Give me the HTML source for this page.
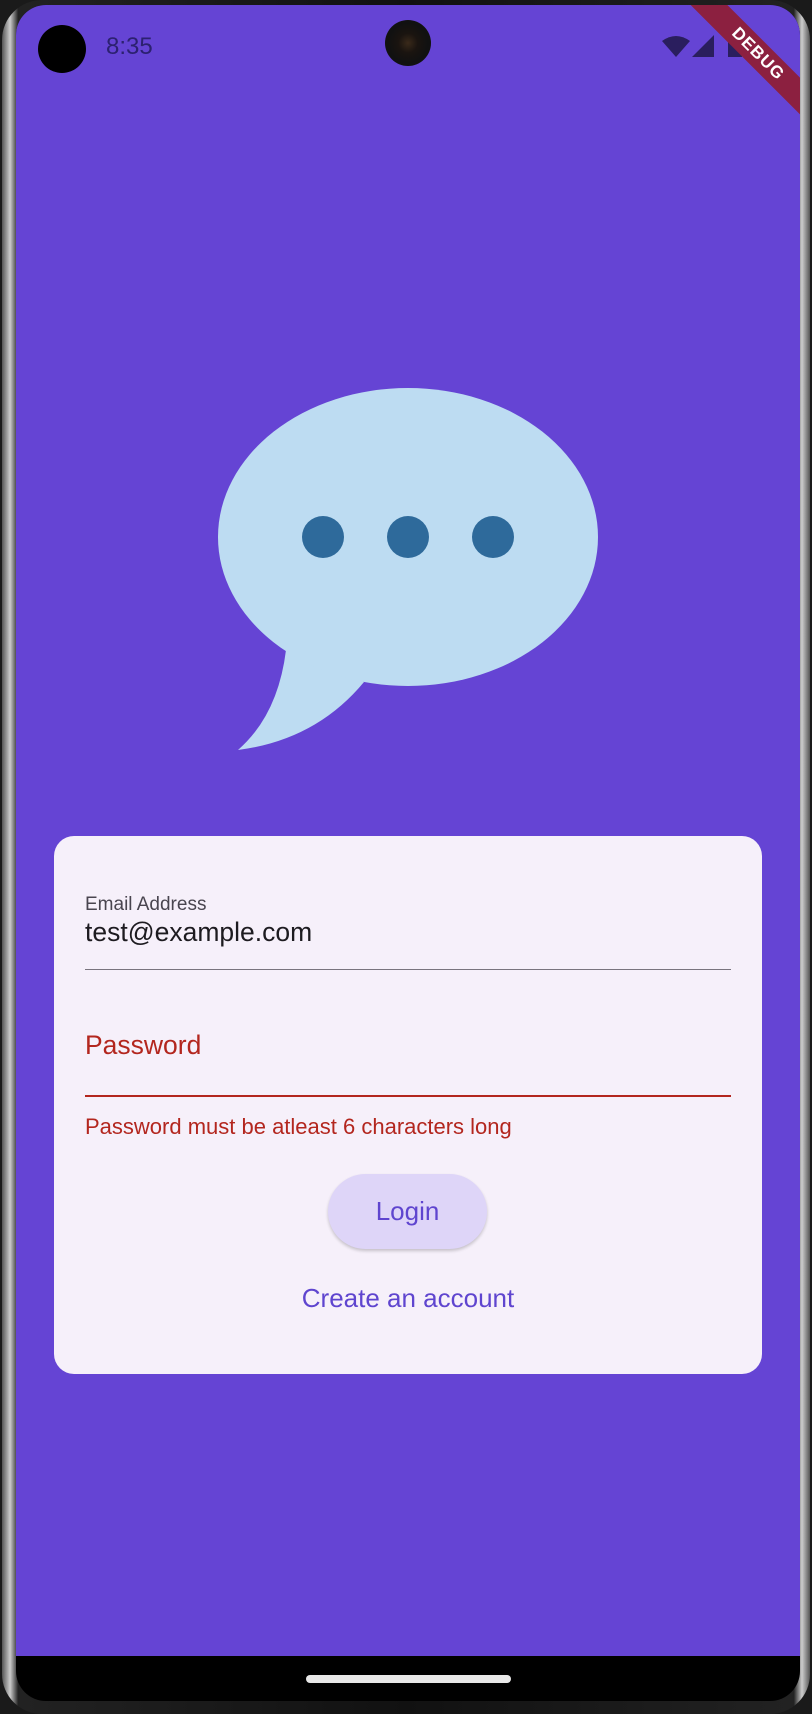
<!DOCTYPE html>
<html><head><meta charset="utf-8"><style>
*{margin:0;padding:0;box-sizing:border-box}
body{width:812px;height:1714px;background:#1a1a1a;position:relative;overflow:hidden;font-family:"Liberation Sans",sans-serif}
.frame{position:absolute;left:2px;top:0;width:808px;height:1714px;border-radius:40px;background:linear-gradient(90deg,#555,#ccc 1%,#222 2%,#111 50%,#222 98%,#ccc 99%,#555)}
.screen{position:absolute;left:16px;top:5px;width:784px;height:1696px;border-radius:30px;overflow:hidden;background:#000}
.purple{position:absolute;left:0;top:0;width:784px;height:1651px;background:#6544d4}
.abs{position:absolute}
.card{position:absolute;left:38px;top:831px;width:708px;height:538px;border-radius:20px;background:#f6f0fa}
</style></head><body>
<div class="frame"></div>
<div class="screen">
<div class="purple"></div>
<div class="abs" style="left:22px;top:20px;width:48px;height:48px;border-radius:50%;background:#000"></div>
<div class="abs" style="left:90px;top:28px;font-size:24px;color:#2c2170">8:35</div>
<div class="abs" style="left:369px;top:15px;width:46px;height:46px;border-radius:50%;background:radial-gradient(circle at 50% 50%,#3a2a1a 0,#1a1410 30%,#111 60%)"></div>
<svg class="abs" style="left:646px;top:30px" width="120" height="26" viewBox="0 0 120 26">
<path d="M0 6 Q14 -4 28 6 L14 22 Z" fill="#2a1e5e"/>
<path d="M30 22 L52 0 L52 22 Z" fill="#2a1e5e"/>
<rect x="66" y="0" width="14" height="22" fill="#2a1e5e"/>
</svg>
<div class="abs" style="left:642px;top:36px;width:200px;height:26px;background:#8c2040;transform:rotate(45deg);transform-origin:50% 50%;color:#fff;font-weight:bold;font-size:17px;text-align:center;line-height:26px;letter-spacing:1px">DEBUG</div>
<svg class="abs" style="left:0;top:0" width="784" height="800">
<path d="M270 645 Q262 710 222 745 Q300 735 348 677 Z" fill="#bddcf2"/>
<ellipse cx="392" cy="532" rx="190" ry="149" fill="#bddcf2"/>
<circle cx="307" cy="532" r="21" fill="#2e6a9b"/>
<circle cx="392" cy="532" r="21" fill="#2e6a9b"/>
<circle cx="477" cy="532" r="21" fill="#2e6a9b"/>
</svg>
<div class="card">
<div class="abs" style="left:31px;top:58px;font-size:19px;color:#49454f">Email Address</div>
<div class="abs" style="left:31px;top:81px;font-size:26.5px;color:#1d1b20">test@example.com</div>
<div class="abs" style="left:31px;top:133px;width:646px;height:1px;background:#79747e"></div>
<div class="abs" style="left:31px;top:194px;font-size:26.5px;color:#b3261e">Password</div>
<div class="abs" style="left:31px;top:259px;width:646px;height:2px;background:#b3261e"></div>
<div class="abs" style="left:31px;top:278px;font-size:22px;color:#b3261e">Password must be atleast 6 characters long</div>
<div class="abs" style="left:274px;top:338px;width:159px;height:75px;border-radius:38px;background:#ded5f8;box-shadow:0 2px 3px rgba(0,0,0,.2);text-align:center;line-height:75px;font-size:26px;color:#5f45cf">Login</div>
<div class="abs" style="left:0;top:447px;width:708px;text-align:center;font-size:26px;color:#5f45cf">Create an account</div>
</div>
<div class="abs" style="left:290px;top:1670px;width:205px;height:8px;border-radius:4px;background:#e8e8e8"></div>
</div>
</body></html>
